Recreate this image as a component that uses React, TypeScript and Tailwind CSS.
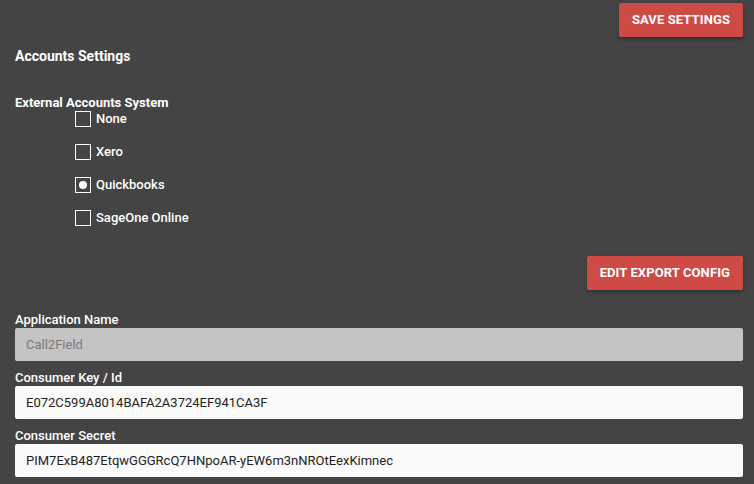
type Option = { label: string; checked?: boolean };

const systems: Option[] = [
  { label: "None" },
  { label: "Xero" },
  { label: "Quickbooks", checked: true },
  { label: "SageOne Online" },
];

function RedButton({ children }: { children: React.ReactNode }) {
  return (
    <button className="h-[34px] rounded-[2px] bg-[#cd4a45] px-[13px] text-[13px] font-bold uppercase tracking-[0.1px] text-white shadow-[0_2px_4px_rgba(0,0,0,0.35)]">
      {children}
    </button>
  );
}

function Field({
  label,
  value,
  disabled,
}: {
  label: string;
  value: string;
  disabled?: boolean;
}) {
  return (
    <div className="flex flex-col">
      <label className="h-[18px] pt-[2px] text-[13px] font-medium leading-[16px] text-white">
        {label}
      </label>
      <div
        className={
          disabled
            ? "flex h-[33px] items-center rounded-[2px] bg-[#c4c4c4] px-[11px] text-[13px] text-[#7a7a7a]"
            : "flex h-[33px] items-center rounded-[2px] bg-[#fafafa] px-[11px] text-[13px] text-[#222]"
        }
      >
        {value}
      </div>
    </div>
  );
}

export default function App() {
  return (
    <div
      className="h-[484px] w-[754px] overflow-hidden bg-[#444444] pl-[15px] pr-[11px] pt-[3px] text-white"
      style={{ fontFamily: "Roboto, 'Liberation Sans', sans-serif" }}
    >
      <div className="flex justify-end">
        <RedButton>Save Settings</RedButton>
      </div>

      <h2 className="mt-[9px] text-[14px] font-bold leading-[20px]">Accounts Settings</h2>

      <h3 className="mt-[29px] text-[13px] font-bold leading-[16px]">External Accounts System</h3>

      <div className="ml-[60px] flex flex-col gap-[17px]">
        {systems.map((o) => (
          <div key={o.label} className="flex h-[16px] items-center gap-[5px]">
            <span className="flex h-[16px] w-[16px] items-center justify-center border-[1.5px] border-white">
              {o.checked && <span className="h-[8px] w-[8px] rounded-full bg-white" />}
            </span>
            <span className="text-[13px] font-medium">{o.label}</span>
          </div>
        ))}
      </div>

      <div className="mt-[30px] flex justify-end">
        <RedButton>Edit Export Config</RedButton>
      </div>

      <div className="mt-[20px] flex flex-col gap-[7px]">
        <Field label="Application Name" value="Call2Field" disabled />
        <Field label="Consumer Key / Id" value="E072C599A8014BAFA2A3724EF941CA3F" />
        <Field label="Consumer Secret" value="PIM7ExB487EtqwGGGRcQ7HNpoAR-yEW6m3nNROtEexKimnec" />
      </div>
    </div>
  );
}
